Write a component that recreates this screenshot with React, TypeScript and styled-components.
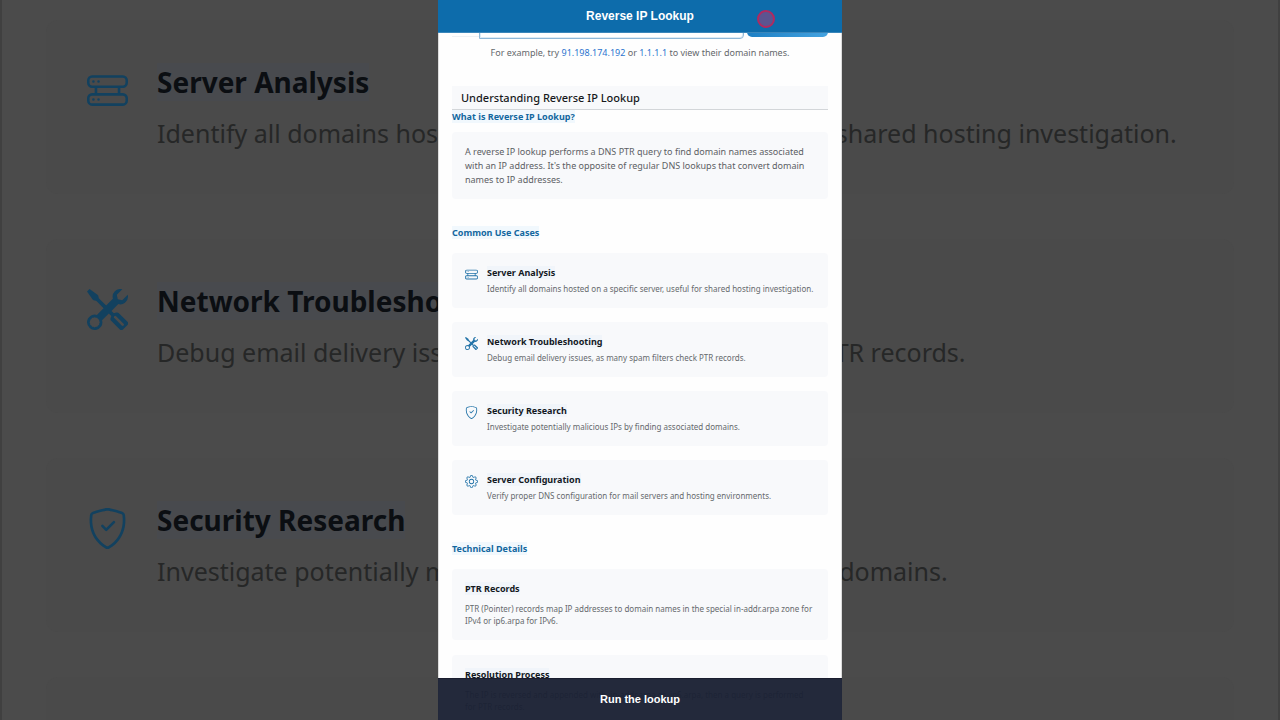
import React from "react";
import styled, { createGlobalStyle, css } from "styled-components";
import { BsGear, BsHddRack, BsShieldCheck, BsTools } from "react-icons/bs";
import type { IconType } from "react-icons";

const sans = `"Noto Sans", "Open Sans", sans-serif`;
const ui = `"Liberation Sans", Arial, sans-serif`;

const GlobalStyle = createGlobalStyle`
  *, *::before, *::after { box-sizing: border-box; }
  body { margin: 0; background: #4b4b4b; font-family: ${sans}; }
  h1, h2, h3, h4, p, ul { margin: 0; padding: 0; }
`;

const Stage = styled.div`
  display: grid;
  grid-template: minmax(0, 1fr) / minmax(0, 1fr);
  height: 100vh;
  overflow: hidden;
`;

const Backdrop = styled.div`
  grid-area: 1 / 1;
  min-height: 0;
  overflow: hidden;
  padding: 20px 44px 0;
  background: #4b4b4b;
  border: solid #404040;
  border-width: 0 2px;
`;

const Phone = styled.div`
  grid-area: 1 / 1;
  justify-self: center;
  position: relative;
  width: 100%;
  max-width: 404px;
  min-height: 0;
  overflow: hidden;
  background: #fefefe;
`;

const TopBar = styled.header`
  position: absolute;
  inset: 0 0 auto;
  display: flex;
  align-items: center;
  justify-content: center;
  height: 33px;
  background: #0d6cab;
  border-bottom: 1px solid #3a86ba;
`;

const BarTitle = styled.h1`
  font: 700 12px/16px ${ui};
  color: #fff;
`;

const TapMarker = styled.span`
  position: absolute;
  top: 10px;
  right: 67px;
  width: 18px;
  height: 18px;
  border: 2px solid #b02a60;
  border-radius: 50%;
  background: #5c5490;
`;

const BottomBar = styled.button`
  position: absolute;
  inset: auto 0 0;
  width: 100%;
  height: 42px;
  padding: 0 0 2px;
  border: 0;
  border-top: 1px solid #1a1d2e;
  background: rgba(26, 32, 51, 0.96);
  font: 700 11px/14px ${ui};
  color: #fff;
`;

const Page = styled.main`
  padding: 8px 13px 0;
  border: solid #dcdcdc;
  border-width: 0 1px;
`;

const SearchRow = styled.form`
  display: grid;
  grid-template-columns: 27px 1fr 81px;
  gap: 0;
  height: 31px;
`;

const SearchIcon = styled.span`
  height: 29px;
  border-bottom: 1px solid #eef1f4;
`;

const SearchInput = styled.input`
  min-width: 0;
  margin-right: 3px;
  padding: 0 8px;
  border: 1px solid #8fb8d8;
  border-radius: 0 4px 4px 0;
  background: #fff;
  box-shadow: inset 0 0 0 1px #dcebf6;
  font: 9px/14px ${sans};
  outline: 0;
`;

const SearchButton = styled.button`
  height: 29px;
  padding: 0;
  border: 0;
  border-radius: 5px;
  background: linear-gradient(90deg, #1c7fc4, #45a3e0);
`;

const Hint = styled.p`
  margin-top: 7px;
  font-size: 9px;
  line-height: 14px;
  text-align: center;
  color: #65686c;
`;

const HintLink = styled.a`
  color: #2b74cf;
  text-decoration: none;
`;

const SectionTitle = styled.h2`
  margin-top: 26px;
  padding: 4px 9px 3px;
  background: #f8f9fb;
  border-bottom: 1px solid #d3d6d9;
  font-size: 11px;
  font-weight: 500;
  line-height: 16px;
  color: #17191c;
`;

const SubTitle = styled.h3<{ $first?: boolean }>`
  margin-top: ${(p) => (p.$first ? 0 : 27)}px;
  padding-bottom: ${(p) => (p.$first ? 8 : 13)}px;
  font-size: 9px;
  font-weight: 700;
  line-height: 14px;
  color: #13679f;
`;

const Mark = styled.span`
  background: #f1f8fd;
`;

const Card = styled.div`
  padding: 13px;
  border-radius: 4px;
  background: #f8f9fb;
`;

const IntroCard = styled(Card)`
  padding-bottom: 12px;
`;

const Intro = styled.p`
  font-size: 9px;
  line-height: 14px;
  color: #5c6064;
`;

const CaseList = styled.ul<{ $large?: boolean }>`
  display: flex;
  flex-direction: column;
  gap: ${(p) => (p.$large ? 45 : 14)}px;
  list-style: none;
`;

const CaseItem = styled.li<{ $large?: boolean }>`
  display: flex;
  flex: none;
  align-items: flex-start;
  ${(p) =>
    p.$large
      ? css`
          gap: 29px;
          height: 174px;
          padding: 41px;
          border-radius: 12px;
          background: #4a4a4a;
        `
      : css`
          gap: 9px;
          height: 55px;
          padding: 13px;
          border-radius: 4px;
          background: #f8f9fb;
        `}
`;

const IconBox = styled.span<{ $large?: boolean }>`
  display: flex;
  flex: none;
  padding-top: ${(p) => (p.$large ? 9 : 2)}px;
  color: ${(p) => (p.$large ? "#12415f" : "#2273a8")};
  svg {
    width: ${(p) => (p.$large ? 41 : 13)}px;
    height: ${(p) => (p.$large ? 41 : 13)}px;
  }
`;

const CaseTitle = styled.h4<{ $large?: boolean }>`
  font-size: ${(p) => (p.$large ? 28 : 9)}px;
  font-weight: 700;
  line-height: ${(p) => (p.$large ? 42 : 13)}px;
  color: ${(p) => (p.$large ? "#0b0e12" : "#14191f")};
  white-space: nowrap;
  span {
    background: ${(p) => (p.$large ? "#484a4e" : "#f1f5fa")};
  }
`;

const CaseText = styled.p<{ $large?: boolean }>`
  margin-top: ${(p) => (p.$large ? 12 : 4)}px;
  font-size: ${(p) => (p.$large ? 25 : 8)}px;
  line-height: ${(p) => (p.$large ? 36 : 12)}px;
  color: ${(p) => (p.$large ? "#262727" : "#66696d")};
  white-space: nowrap;
`;

const DetailList = styled.div`
  display: flex;
  flex-direction: column;
  gap: 15px;
`;

const DetailTitle = styled.h4`
  font-size: 9px;
  font-weight: 700;
  line-height: 13px;
  color: #14191f;
  span {
    background: #f1f5fa;
  }
`;

const DetailText = styled.p`
  margin-top: 8px;
  font-size: 8px;
  line-height: 12px;
  color: #66696d;
`;

interface UseCase {
  icon: IconType;
  title: string;
  text: string;
}

const useCases: UseCase[] = [
  {
    icon: BsHddRack,
    title: "Server Analysis",
    text: "Identify all domains hosted on a specific server, useful for shared hosting investigation.",
  },
  {
    icon: BsTools,
    title: "Network Troubleshooting",
    text: "Debug email delivery issues, as many spam filters check PTR records.",
  },
  {
    icon: BsShieldCheck,
    title: "Security Research",
    text: "Investigate potentially malicious IPs by finding associated domains.",
  },
  {
    icon: BsGear,
    title: "Server Configuration",
    text: "Verify proper DNS configuration for mail servers and hosting environments.",
  },
];

const details = [
  {
    title: "PTR Records",
    text: "PTR (Pointer) records map IP addresses to domain names in the special in-addr.arpa zone for IPv4 or ip6.arpa for IPv6.",
  },
  {
    title: "Resolution Process",
    text: "The IP is reversed and appended with .in-addr.arpa or .ip6.arpa, then a query is performed for PTR records.",
  },
];

function UseCases({ items, large }: { items: UseCase[]; large?: boolean }) {
  return (
    <CaseList $large={large}>
      {items.map(({ icon: Icon, title, text }) => (
        <CaseItem key={title} $large={large}>
          <IconBox $large={large}>
            <Icon aria-hidden />
          </IconBox>
          <div>
            <CaseTitle $large={large}>
              <span>{title}</span>
            </CaseTitle>
            <CaseText $large={large}>{text}</CaseText>
          </div>
        </CaseItem>
      ))}
      {large && <CaseItem $large />}
    </CaseList>
  );
}

export default function App() {
  return (
    <>
      <GlobalStyle />
      <Stage>
        <Backdrop aria-hidden>
          <UseCases items={useCases.slice(0, 3)} large />
        </Backdrop>
        <Phone>
          <Page>
            <SearchRow>
              <SearchIcon />
              <SearchInput aria-label="IP address" />
              <SearchButton type="button" aria-label="Lookup" />
            </SearchRow>
            <Hint>
              For example, try <HintLink href="#wiki">91.198.174.192</HintLink> or{" "}
              <HintLink href="#one">1.1.1.1</HintLink> to view their domain names.
            </Hint>
            <SectionTitle>Understanding Reverse IP Lookup</SectionTitle>
            <SubTitle $first>
              <Mark>What is Reverse IP Lookup?</Mark>
            </SubTitle>
            <IntroCard>
              <Intro>
                A reverse IP lookup performs a DNS PTR query to find domain names associated with
                an IP address. It's the opposite of regular DNS lookups that convert domain names
                to IP addresses.
              </Intro>
            </IntroCard>
            <SubTitle>
              <Mark>Common Use Cases</Mark>
            </SubTitle>
            <UseCases items={useCases} />
            <SubTitle>
              <Mark>Technical Details</Mark>
            </SubTitle>
            <DetailList>
              {details.map((d) => (
                <Card key={d.title}>
                  <DetailTitle>
                    <span>{d.title}</span>
                  </DetailTitle>
                  <DetailText>{d.text}</DetailText>
                </Card>
              ))}
            </DetailList>
          </Page>
          <TopBar>
            <BarTitle>Reverse IP Lookup</BarTitle>
            <TapMarker />
          </TopBar>
          <BottomBar type="button">Run the lookup</BottomBar>
        </Phone>
      </Stage>
    </>
  );
}
